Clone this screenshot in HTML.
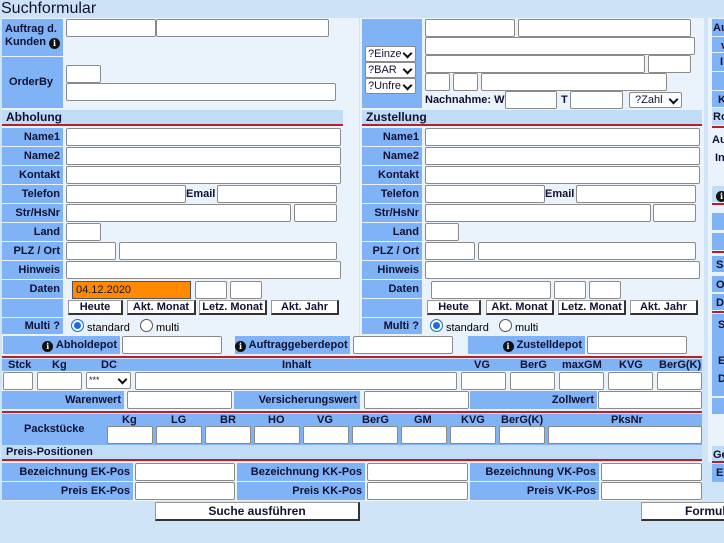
<!DOCTYPE html>
<html><head><meta charset="utf-8"><style>
*{box-sizing:border-box;margin:0;padding:0}
body{width:724px;height:543px;overflow:hidden;background:#d0e4f7;font-family:"Liberation Sans",Arial,sans-serif;position:relative;color:#111133}
div,span{position:absolute}
.p{background:#eaf2fc}
.l{background:#80b2f6;font-weight:bold;font-size:11px;text-align:right;padding-right:3px;line-height:18px;white-space:nowrap;overflow:hidden}
.i{background:#fff;border:1px solid #8a8a8a;border-radius:2px}
.h{background:#c0dcf6;font-weight:bold;font-size:12px;padding-left:4px;line-height:14px;border-bottom:2px solid #b5202a}
.t{font-weight:bold;font-size:11px;white-space:nowrap}
.b{background:#fff;border:1px solid #999;border-right:2px solid #333;border-bottom:2px solid #333;font-weight:bold;font-size:11px;text-align:center;line-height:12px}
.s{background:#fff;border:1px solid #8a8a8a;border-radius:2px;font-size:11px;padding-left:2px;line-height:14px;overflow:hidden;white-space:nowrap}
.s:after{content:"";position:absolute;right:4px;top:3px;width:5px;height:5px;border-right:2px solid #111;border-bottom:2px solid #111;transform:rotate(45deg);background:#fff;box-shadow:3px 3px 0 3px #fff}
.r{border-bottom:2px solid #b5202a}
.rad{width:13px;height:13px;border-radius:50%;border:1px solid #555;background:#fff}
.rad.on{border:1px solid #1a6fd6;box-shadow:inset 0 0 0 2px #fff;background:#1a6fd6}
.ic{position:relative;display:inline-block;width:11px;height:11px;border-radius:50%;background:#111;color:#fff;font-size:8px;line-height:11px;text-align:center;vertical-align:-1px;font-family:"DejaVu Serif",serif}
</style></head><body>
<div style="left:0;top:0;width:724px;height:18px;background:#cce2f7;font-size:16px;line-height:17px;padding-left:1px">Suchformular</div>

<div class="p" style="left:2px;top:18px;width:357px;height:317px"></div>
<div class="l" style="left:2px;top:19px;width:61px;height:37px;line-height:13px;text-align:left;padding:4px 0 0 3px;white-space:normal">Auftrag d. Kunden <span class="ic">i</span></div>
<div class="i" style="left:66px;top:19px;width:90px;height:18px"></div>
<div class="i" style="left:156px;top:19px;width:173px;height:18px"></div>
<div class="l" style="left:2px;top:57px;width:61px;height:51px;line-height:51px;text-align:center">OrderBy</div>
<div class="i" style="left:66px;top:65px;width:35px;height:18px"></div>
<div class="i" style="left:66px;top:83px;width:270px;height:18px"></div>
<div class="h" style="left:2px;top:110px;width:341px;height:16px">Abholung</div>

<div class="l" style="left:2px;top:128px;width:61px;height:18px">Name1</div><div class="i" style="left:66px;top:128px;width:275px;height:18px"></div>
<div class="l" style="left:2px;top:147px;width:61px;height:18px">Name2</div><div class="i" style="left:66px;top:147px;width:275px;height:18px"></div>
<div class="l" style="left:2px;top:166px;width:61px;height:18px">Kontakt</div><div class="i" style="left:66px;top:166px;width:275px;height:18px"></div>
<div class="l" style="left:2px;top:185px;width:61px;height:18px">Telefon</div><div class="i" style="left:66px;top:185px;width:120px;height:18px"></div><div class="t" style="left:186px;top:188px">Email</div><div class="i" style="left:217px;top:185px;width:120px;height:18px"></div>
<div class="l" style="left:2px;top:204px;width:61px;height:18px">Str/HsNr</div><div class="i" style="left:66px;top:204px;width:225px;height:18px"></div><div class="i" style="left:294px;top:204px;width:43px;height:18px"></div>
<div class="l" style="left:2px;top:223px;width:61px;height:18px">Land</div><div class="i" style="left:66px;top:223px;width:35px;height:18px"></div>
<div class="l" style="left:2px;top:242px;width:61px;height:18px">PLZ / Ort</div><div class="i" style="left:66px;top:242px;width:50px;height:18px"></div><div class="i" style="left:119px;top:242px;width:218px;height:18px"></div>
<div class="l" style="left:2px;top:261px;width:61px;height:18px">Hinweis</div><div class="i" style="left:66px;top:261px;width:275px;height:18px"></div>
<div class="l" style="left:2px;top:280px;width:61px;height:18px">Daten</div><div style="left:72px;top:281px;width:119px;height:18px;background:#ff8a00;border:1px solid #555;font-size:11px;line-height:16px;padding-left:3px">04.12.2020</div><div class="i" style="left:195px;top:281px;width:32px;height:18px"></div><div class="i" style="left:230px;top:281px;width:32px;height:18px"></div>
<div class="l" style="left:2px;top:299px;width:61px;height:18px"></div>
<div class="b" style="left:68px;top:300px;width:55px;height:15px">Heute</div><div class="b" style="left:127px;top:300px;width:69px;height:15px">Akt. Monat</div><div class="b" style="left:199px;top:300px;width:68px;height:15px">Letz. Monat</div><div class="b" style="left:271px;top:300px;width:68px;height:15px">Akt. Jahr</div>
<div class="l" style="left:2px;top:318px;width:61px;height:16px;line-height:16px">Multi ?</div>
<div class="rad on" style="left:71px;top:319px"></div><div class="t" style="left:87px;top:322px;font-weight:normal;font-size:11px;color:#000">standard</div>
<div class="rad" style="left:140px;top:319px"></div><div class="t" style="left:156px;top:322px;font-weight:normal;color:#000">multi</div>

<div class="p" style="left:360px;top:18px;width:344px;height:317px"></div>
<div class="l" style="left:362px;top:19px;width:60px;height:89px"></div>
<div class="s" style="left:365px;top:46px;width:51px;height:16px">?Einze</div>
<div class="s" style="left:365px;top:62px;width:51px;height:16px">?BAR</div>
<div class="s" style="left:365px;top:78px;width:51px;height:16px">?Unfre</div>
<div class="i" style="left:425px;top:19px;width:90px;height:18px"></div><div class="i" style="left:518px;top:19px;width:173px;height:18px"></div>
<div class="i" style="left:425px;top:37px;width:270px;height:18px"></div>
<div class="i" style="left:425px;top:55px;width:220px;height:18px"></div><div class="i" style="left:648px;top:55px;width:43px;height:18px"></div>
<div class="i" style="left:425px;top:73px;width:25px;height:18px"></div><div class="i" style="left:453px;top:73px;width:25px;height:18px"></div><div class="i" style="left:481px;top:73px;width:186px;height:18px"></div>
<div class="t" style="left:425px;top:94px">Nachnahme: W</div><div class="i" style="left:505px;top:91px;width:52px;height:18px"></div>
<div class="t" style="left:561px;top:94px">T</div><div class="i" style="left:570px;top:91px;width:53px;height:18px"></div>
<div class="s" style="left:629px;top:92px;width:53px;height:16px">&nbsp;?Zahl</div>
<div class="h" style="left:362px;top:110px;width:340px;height:16px">Zustellung</div>

<div class="l" style="left:362px;top:128px;width:60px;height:18px">Name1</div><div class="i" style="left:425px;top:128px;width:275px;height:18px"></div>
<div class="l" style="left:362px;top:147px;width:60px;height:18px">Name2</div><div class="i" style="left:425px;top:147px;width:275px;height:18px"></div>
<div class="l" style="left:362px;top:166px;width:60px;height:18px">Kontakt</div><div class="i" style="left:425px;top:166px;width:275px;height:18px"></div>
<div class="l" style="left:362px;top:185px;width:60px;height:18px">Telefon</div><div class="i" style="left:425px;top:185px;width:120px;height:18px"></div><div class="t" style="left:545px;top:188px">Email</div><div class="i" style="left:576px;top:185px;width:120px;height:18px"></div>
<div class="l" style="left:362px;top:204px;width:60px;height:18px">Str/HsNr</div><div class="i" style="left:425px;top:204px;width:226px;height:18px"></div><div class="i" style="left:653px;top:204px;width:43px;height:18px"></div>
<div class="l" style="left:362px;top:223px;width:60px;height:18px">Land</div><div class="i" style="left:425px;top:223px;width:34px;height:18px"></div>
<div class="l" style="left:362px;top:242px;width:60px;height:18px">PLZ / Ort</div><div class="i" style="left:425px;top:242px;width:50px;height:18px"></div><div class="i" style="left:478px;top:242px;width:218px;height:18px"></div>
<div class="l" style="left:362px;top:261px;width:60px;height:18px">Hinweis</div><div class="i" style="left:425px;top:261px;width:275px;height:18px"></div>
<div class="l" style="left:362px;top:280px;width:60px;height:18px">Daten</div><div class="i" style="left:431px;top:281px;width:120px;height:18px"></div><div class="i" style="left:554px;top:281px;width:32px;height:18px"></div><div class="i" style="left:589px;top:281px;width:32px;height:18px"></div>
<div class="l" style="left:362px;top:299px;width:60px;height:18px"></div>
<div class="b" style="left:427px;top:300px;width:54px;height:15px">Heute</div><div class="b" style="left:486px;top:300px;width:68px;height:15px">Akt. Monat</div><div class="b" style="left:558px;top:300px;width:68px;height:15px">Letz. Monat</div><div class="b" style="left:630px;top:300px;width:68px;height:15px">Akt. Jahr</div>
<div class="l" style="left:362px;top:318px;width:60px;height:16px;line-height:16px">Multi ?</div>
<div class="rad on" style="left:430px;top:319px"></div><div class="t" style="left:446px;top:322px;font-weight:normal;color:#000">standard</div>
<div class="rad" style="left:499px;top:319px"></div><div class="t" style="left:515px;top:322px;font-weight:normal;color:#000">multi</div>

<div class="p" style="left:2px;top:335px;width:702px;height:20px"></div>
<div class="l" style="left:3px;top:336px;width:117px;height:18px"><span class="ic">i</span> Abholdepot</div>
<div class="i" style="left:122px;top:336px;width:100px;height:18px"></div>
<div class="l" style="left:235px;top:336px;width:115px;height:18px"><span class="ic">i</span> Auftraggeberdepot</div>
<div class="i" style="left:353px;top:336px;width:100px;height:18px"></div>
<div class="l" style="left:468px;top:336px;width:117px;height:18px"><span class="ic">i</span> Zustelldepot</div>
<div class="i" style="left:587px;top:336px;width:100px;height:18px"></div>
<div class="r" style="left:2px;top:355px;width:700px;height:3px;background:#eaf2fc"></div>

<div style="left:2px;top:359px;width:700px;height:12px;background:#80b2f6"></div>
<div class="t" style="left:8px;top:359px">Stck</div><div class="t" style="left:52px;top:359px">Kg</div><div class="t" style="left:101px;top:359px">DC</div><div class="t" style="left:282px;top:359px">Inhalt</div>
<div class="t" style="left:474px;top:359px">VG</div><div class="t" style="left:520px;top:359px">BerG</div><div class="t" style="left:562px;top:359px">maxGM</div><div class="t" style="left:619px;top:359px">KVG</div><div class="t" style="left:659px;top:359px">BerG(K)</div>
<div style="left:2px;top:371px;width:700px;height:19px;background:#eaf2fc"></div>
<div class="i" style="left:3px;top:372px;width:30px;height:18px"></div><div class="i" style="left:37px;top:372px;width:45px;height:18px"></div>
<div class="s" style="left:86px;top:372px;width:45px;height:17px;font-size:9px">***</div>
<div class="i" style="left:135px;top:372px;width:322px;height:18px"></div>
<div class="i" style="left:461px;top:372px;width:45px;height:18px"></div><div class="i" style="left:510px;top:372px;width:45px;height:18px"></div><div class="i" style="left:559px;top:372px;width:45px;height:18px"></div><div class="i" style="left:608px;top:372px;width:45px;height:18px"></div><div class="i" style="left:657px;top:372px;width:45px;height:18px"></div>
<div style="left:2px;top:390px;width:700px;height:20px;background:#eaf2fc"></div>
<div class="l" style="left:2px;top:391px;width:122px;height:18px">Warenwert</div><div class="i" style="left:127px;top:391px;width:105px;height:18px"></div>
<div class="l" style="left:234px;top:391px;width:126px;height:18px">Versicherungswert</div><div class="i" style="left:364px;top:391px;width:105px;height:18px"></div>
<div class="l" style="left:470px;top:391px;width:127px;height:18px">Zollwert</div><div class="i" style="left:598px;top:391px;width:104px;height:18px"></div>
<div class="r" style="left:2px;top:410px;width:700px;height:3px;background:#eaf2fc"></div>

<div style="left:2px;top:414px;width:700px;height:31px;background:#80b2f6"></div>
<div class="t" style="left:24px;top:423px;font-size:11px">Packstücke</div>
<div class="t" style="left:122px;top:414px">Kg</div><div class="t" style="left:171px;top:414px">LG</div><div class="t" style="left:220px;top:414px">BR</div><div class="t" style="left:268px;top:414px">HO</div><div class="t" style="left:317px;top:414px">VG</div><div class="t" style="left:362px;top:414px">BerG</div><div class="t" style="left:414px;top:414px">GM</div><div class="t" style="left:461px;top:414px">KVG</div><div class="t" style="left:501px;top:414px">BerG(K)</div><div class="t" style="left:611px;top:414px">PksNr</div>
<div class="i" style="left:107px;top:426px;width:46px;height:18px"></div><div class="i" style="left:156px;top:426px;width:46px;height:18px"></div><div class="i" style="left:205px;top:426px;width:46px;height:18px"></div><div class="i" style="left:254px;top:426px;width:46px;height:18px"></div><div class="i" style="left:303px;top:426px;width:46px;height:18px"></div><div class="i" style="left:352px;top:426px;width:46px;height:18px"></div><div class="i" style="left:401px;top:426px;width:46px;height:18px"></div><div class="i" style="left:450px;top:426px;width:46px;height:18px"></div><div class="i" style="left:499px;top:426px;width:46px;height:18px"></div><div class="i" style="left:548px;top:426px;width:154px;height:18px"></div>

<div class="h" style="left:2px;top:445px;width:700px;height:16px;font-size:11px">Preis-Positionen</div>
<div style="left:2px;top:462px;width:700px;height:39px;background:#eaf2fc"></div>
<div class="l" style="left:2px;top:463px;width:131px;height:18px">Bezeichnung EK-Pos</div><div class="i" style="left:135px;top:463px;width:100px;height:18px"></div>
<div class="l" style="left:237px;top:463px;width:128px;height:18px">Bezeichnung KK-Pos</div><div class="i" style="left:367px;top:463px;width:101px;height:18px"></div>
<div class="l" style="left:470px;top:463px;width:129px;height:18px">Bezeichnung VK-Pos</div><div class="i" style="left:601px;top:463px;width:101px;height:18px"></div>
<div class="l" style="left:2px;top:482px;width:131px;height:18px">Preis EK-Pos</div><div class="i" style="left:135px;top:482px;width:100px;height:18px"></div>
<div class="l" style="left:237px;top:482px;width:128px;height:18px">Preis KK-Pos</div><div class="i" style="left:367px;top:482px;width:101px;height:18px"></div>
<div class="l" style="left:470px;top:482px;width:129px;height:18px">Preis VK-Pos</div><div class="i" style="left:601px;top:482px;width:101px;height:18px"></div>

<div class="b" style="left:155px;top:502px;width:205px;height:19px;font-size:12px;line-height:16px;background:#fff">Suche ausführen</div>
<div class="b" style="left:641px;top:502px;width:90px;height:19px;font-size:12px;line-height:16px;text-align:left;padding-left:43px">Formular</div>

<div class="p" style="left:708px;top:18px;width:16px;height:444px;background:#eaf2fc"></div>
<div class="l" style="left:712px;top:19px;width:12px;height:17px;text-align:left;padding:0 0 0 1px">Au</div>
<div class="l" style="left:712px;top:37px;width:12px;height:15px;text-align:left;padding-left:9px">v</div>
<div class="l" style="left:712px;top:53px;width:12px;height:18px;text-align:left;padding-left:8px">I</div>
<div class="l" style="left:712px;top:72px;width:12px;height:18px"></div>
<div class="l" style="left:712px;top:91px;width:12px;height:16px;text-align:left;padding-left:6px">K</div>
<div class="l" style="left:712px;top:108px;width:12px;height:17px;text-align:left;padding-left:1px;background:#c0dcf6">Ro</div>
<div style="left:712px;top:126px;width:12px;height:2px;background:#b5202a"></div>
<div class="t" style="left:712px;top:134px">Au</div><div class="t" style="left:715px;top:152px">In</div>
<div class="l" style="left:712px;top:186px;width:12px;height:16px;text-align:left;padding-left:4px;background:#c0dcf6"><span class="ic">i</span></div>
<div style="left:712px;top:203px;width:12px;height:2px;background:#b5202a"></div>
<div class="l" style="left:712px;top:213px;width:12px;height:17px"></div>
<div class="l" style="left:712px;top:233px;width:12px;height:17px"></div>
<div style="left:712px;top:251px;width:12px;height:2px;background:#b5202a"></div>
<div class="l" style="left:712px;top:256px;width:12px;height:16px;text-align:left;padding-left:4px">S</div>
<div class="l" style="left:712px;top:276px;width:12px;height:16px;text-align:left;padding-left:4px">O</div>
<div class="l" style="left:712px;top:294px;width:12px;height:16px;text-align:left;padding-left:4px">D</div>
<div style="left:712px;top:311px;width:12px;height:2px;background:#b5202a"></div>
<div class="l" style="left:712px;top:314px;width:12px;height:82px;text-align:left;padding:2px 0 0 6px;line-height:18px;white-space:normal">St<br><br>E<br>D</div>
<div class="l" style="left:712px;top:398px;width:12px;height:16px"></div>
<div class="l" style="left:712px;top:446px;width:12px;height:15px;text-align:left;padding-left:1px;background:#c0dcf6">Ge</div>
<div style="left:712px;top:461px;width:12px;height:2px;background:#b5202a"></div>
<div class="l" style="left:712px;top:464px;width:12px;height:18px;text-align:left;padding-left:4px">E</div>
</body></html>
